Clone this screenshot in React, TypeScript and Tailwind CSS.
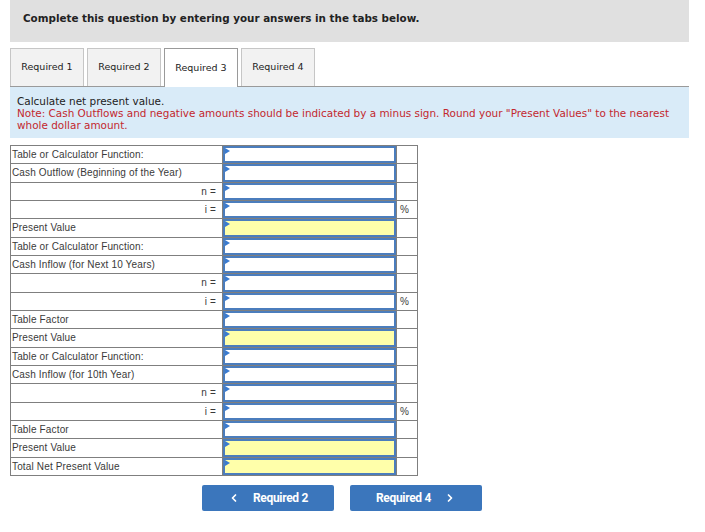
import React from 'react';
import { ChevronLeft, ChevronRight } from 'lucide-react';

type Row = {
  label: string;
  right?: boolean;
  yellow?: boolean;
  unit?: string;
};

const rows: Row[] = [
  { label: 'Table or Calculator Function:' },
  { label: 'Cash Outflow (Beginning of the Year)' },
  { label: 'n =', right: true },
  { label: 'i =', right: true, unit: '%' },
  { label: 'Present Value', yellow: true },
  { label: 'Table or Calculator Function:' },
  { label: 'Cash Inflow (for Next 10 Years)' },
  { label: 'n =', right: true },
  { label: 'i =', right: true, unit: '%' },
  { label: 'Table Factor' },
  { label: 'Present Value', yellow: true },
  { label: 'Table or Calculator Function:' },
  { label: 'Cash Inflow (for 10th Year)' },
  { label: 'n =', right: true },
  { label: 'i =', right: true, unit: '%' },
  { label: 'Table Factor' },
  { label: 'Present Value', yellow: true },
  { label: 'Total Net Present Value', yellow: true },
];

const tabs = ['Required 1', 'Required 2', 'Required 3', 'Required 4'];

const InputCell: React.FC<{ yellow?: boolean }> = ({ yellow }) => (
  <div className={`relative h-full border-2 border-[#4b7dbd] ${yellow ? 'bg-[#ffffaa]' : 'bg-white'}`}>
    <svg className="absolute left-0 top-0" width="5" height="6" viewBox="0 0 5 6">
      <polygon points="0,0 5,3 0,6" fill="#3a7bd0" />
    </svg>
  </div>
);

const App: React.FC = () => {
  return (
    <div className="w-[705px] h-[532px] bg-white font-['DejaVu_Sans',Verdana,sans-serif]">
      <div className="ml-[10px] w-[679px] h-[42px] bg-[#e0e0e0] flex items-center pl-[13px] pb-[5px]">
        <span className="text-[10.35px] font-bold text-[#222]">Complete this question by entering your answers in the tabs below.</span>
      </div>

      <div className="ml-[10px] w-[679px] mt-[7px] flex items-end border-b border-[#9a9a9a] h-[38px]">
        {tabs.map((t, i) => (
          <div
            key={t}
            className={`h-[38px] w-[74px] mr-[3px] flex items-center justify-center text-[9.5px] text-[#222] border border-b-0 ${
              i === 2 ? 'bg-white border-[#9a9a9a] -mb-px h-[39px]' : 'bg-[#f2f2f2] border-[#c6c6c6]'
            }`}
          >
            {t}
          </div>
        ))}
      </div>

      <div className="ml-[10px] w-[679px] h-[51px] bg-[#d9ebf8] px-[7px] pt-[8px] text-[10.45px] leading-[12px]">
        <div className="text-[#222]">Calculate net present value.</div>
        <div className="text-[#c3272e]">
          Note: Cash Outflows and negative amounts should be indicated by a minus sign. Round your "Present Values" to the nearest whole dollar amount.
        </div>
      </div>

      <div className="ml-[10px] mt-[7px] w-[408px] border-l border-t border-[#7f7f7f] font-['Liberation_Sans',Arial,sans-serif] text-[10px] tracking-[0.15px] text-[#3a3a3a]">
        {rows.map((r, idx) => (
          <div key={idx} className="flex h-[18.33px]">
            <div
              className={`w-[212px] border-r border-b border-[#7f7f7f] flex items-center pl-[1px] ${
                r.right ? 'justify-end pr-[6px]' : ''
              }`}
            >
              {r.label}
            </div>
            <div className="w-[173px] border-b border-[#7f7f7f]">
              <InputCell yellow={r.yellow} />
            </div>
            <div className="w-[22px] border-l border-r border-b border-[#7f7f7f] flex items-center pl-[3px] text-[10px]">
              {r.unit}
            </div>
          </div>
        ))}
      </div>

      <div className="mt-[9px] ml-[202px] flex gap-[16px] font-['Roboto',sans-serif]">
        <button className="w-[132px] h-[26px] bg-[#3b76bc] rounded-[2px] text-white text-[12px] font-bold flex items-center justify-center tracking-[-0.3px]">
          <ChevronLeft size={12} strokeWidth={3.5} className="mr-[13px]" />
          Required 2
        </button>
        <button className="w-[132px] h-[26px] bg-[#3b76bc] rounded-[2px] text-white text-[12px] font-bold flex items-center justify-center tracking-[-0.3px]">
          Required 4
          <ChevronRight size={12} strokeWidth={3.5} className="ml-[13px]" />
        </button>
      </div>
    </div>
  );
};

export default App;
